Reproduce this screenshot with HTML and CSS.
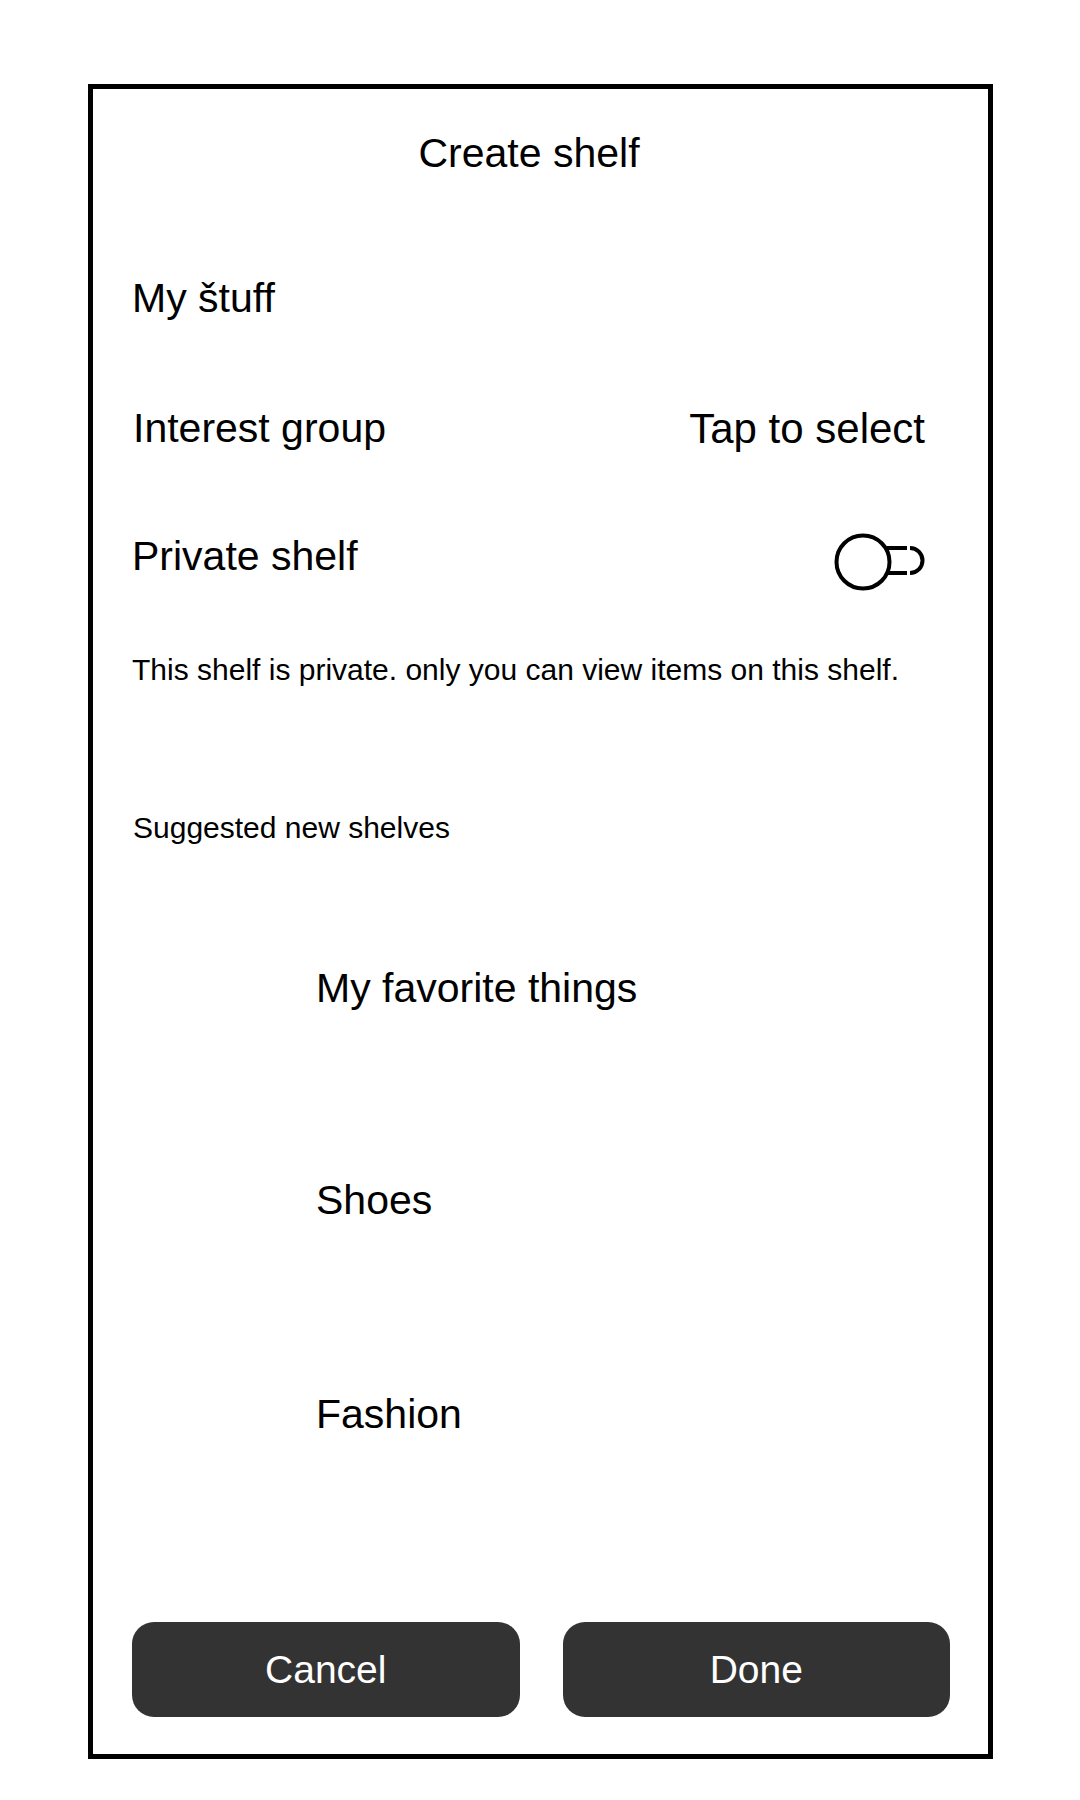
FILE: index.html
```html
<!DOCTYPE html>
<html lang="en">
<head>
<meta charset="utf-8">
<title>Create shelf</title>
<link rel="stylesheet" href="styles.css">
</head>
<body>
<div class="frame">
  <h1 class="title">Create shelf</h1>
  <div class="name">My štuff</div>
  <div class="row interest">
    <span>Interest group</span>
    <span class="select">Tap to select</span>
  </div>
  <div class="row private">
    <span>Private shelf</span>
    <svg class="toggle" width="94" height="60" viewBox="0 0 94 60" aria-hidden="true">
      <path d="M55 16 H75 M78 16 A12.5 12.5 0 0 1 78 41 M75 41 H55" fill="none" stroke="#000" stroke-width="4"/>
      <circle cx="31" cy="30" r="26.5" fill="#fff" stroke="#000" stroke-width="4"/>
    </svg>
  </div>
  <p class="note">This shelf is private. only you can view items on this shelf.</p>
  <div class="section">Suggested new shelves</div>
  <ul class="suggestions">
    <li>My favorite things</li>
    <li>Shoes</li>
    <li>Fashion</li>
  </ul>
  <div class="footer">
    <button class="btn">Cancel</button>
    <button class="btn">Done</button>
  </div>
</div>
</body>
</html>
```
FILE: styles.css
```css
html, body {
  margin: 0;
  background: #fff;
}
body {
  padding: 84px 0 0 88px;
  font-family: "Liberation Sans", Arial, sans-serif;
  color: #000;
}
.frame {
  box-sizing: border-box;
  width: 905px;
  height: 1675px;
  border: 5px solid #000;
  padding: 41px 38px 37px 39px;
  display: flex;
  flex-direction: column;
}
.title {
  margin: 0;
  padding-right: 24px;
  font-size: 41px;
  line-height: 46px;
  font-weight: normal;
  text-align: center;
}
.name {
  margin-top: 99px;
  font-size: 41px;
  line-height: 47px;
}
.row {
  display: flex;
  justify-content: space-between;
  align-items: center;
  height: 47px;
  font-size: 41px;
  line-height: 47px;
  padding-right: 25px;
}
.interest {
  margin-top: 83px;
  padding-left: 1px;
}
.select {
  font-size: 42px;
}
.private {
  margin-top: 81px;
}
.toggle {
  display: block;
  flex: none;
  margin-top: 11px;
  margin-right: -1px;
}
.note {
  margin: 73px 0 0;
  font-size: 30px;
  line-height: 34px;
}
.section {
  margin-top: 124px;
  padding-left: 1px;
  font-size: 30px;
  line-height: 34px;
}
.suggestions {
  list-style: none;
  margin: 0;
  padding: 0 0 0 184px;
  font-size: 41px;
  line-height: 47px;
}
.suggestions li:nth-child(1) {
  margin-top: 120px;
}
.suggestions li:nth-child(2) {
  margin-top: 165px;
}
.suggestions li:nth-child(3) {
  margin-top: 167px;
}
.footer {
  margin-top: auto;
  display: grid;
  grid-template-columns: 1fr 1fr;
  column-gap: 43px;
}
.btn {
  height: 95px;
  border: none;
  border-radius: 22px;
  background: #333;
  color: #fff;
  font-family: "Liberation Sans", Arial, sans-serif;
  font-size: 39px;
  padding: 0;
}
```
